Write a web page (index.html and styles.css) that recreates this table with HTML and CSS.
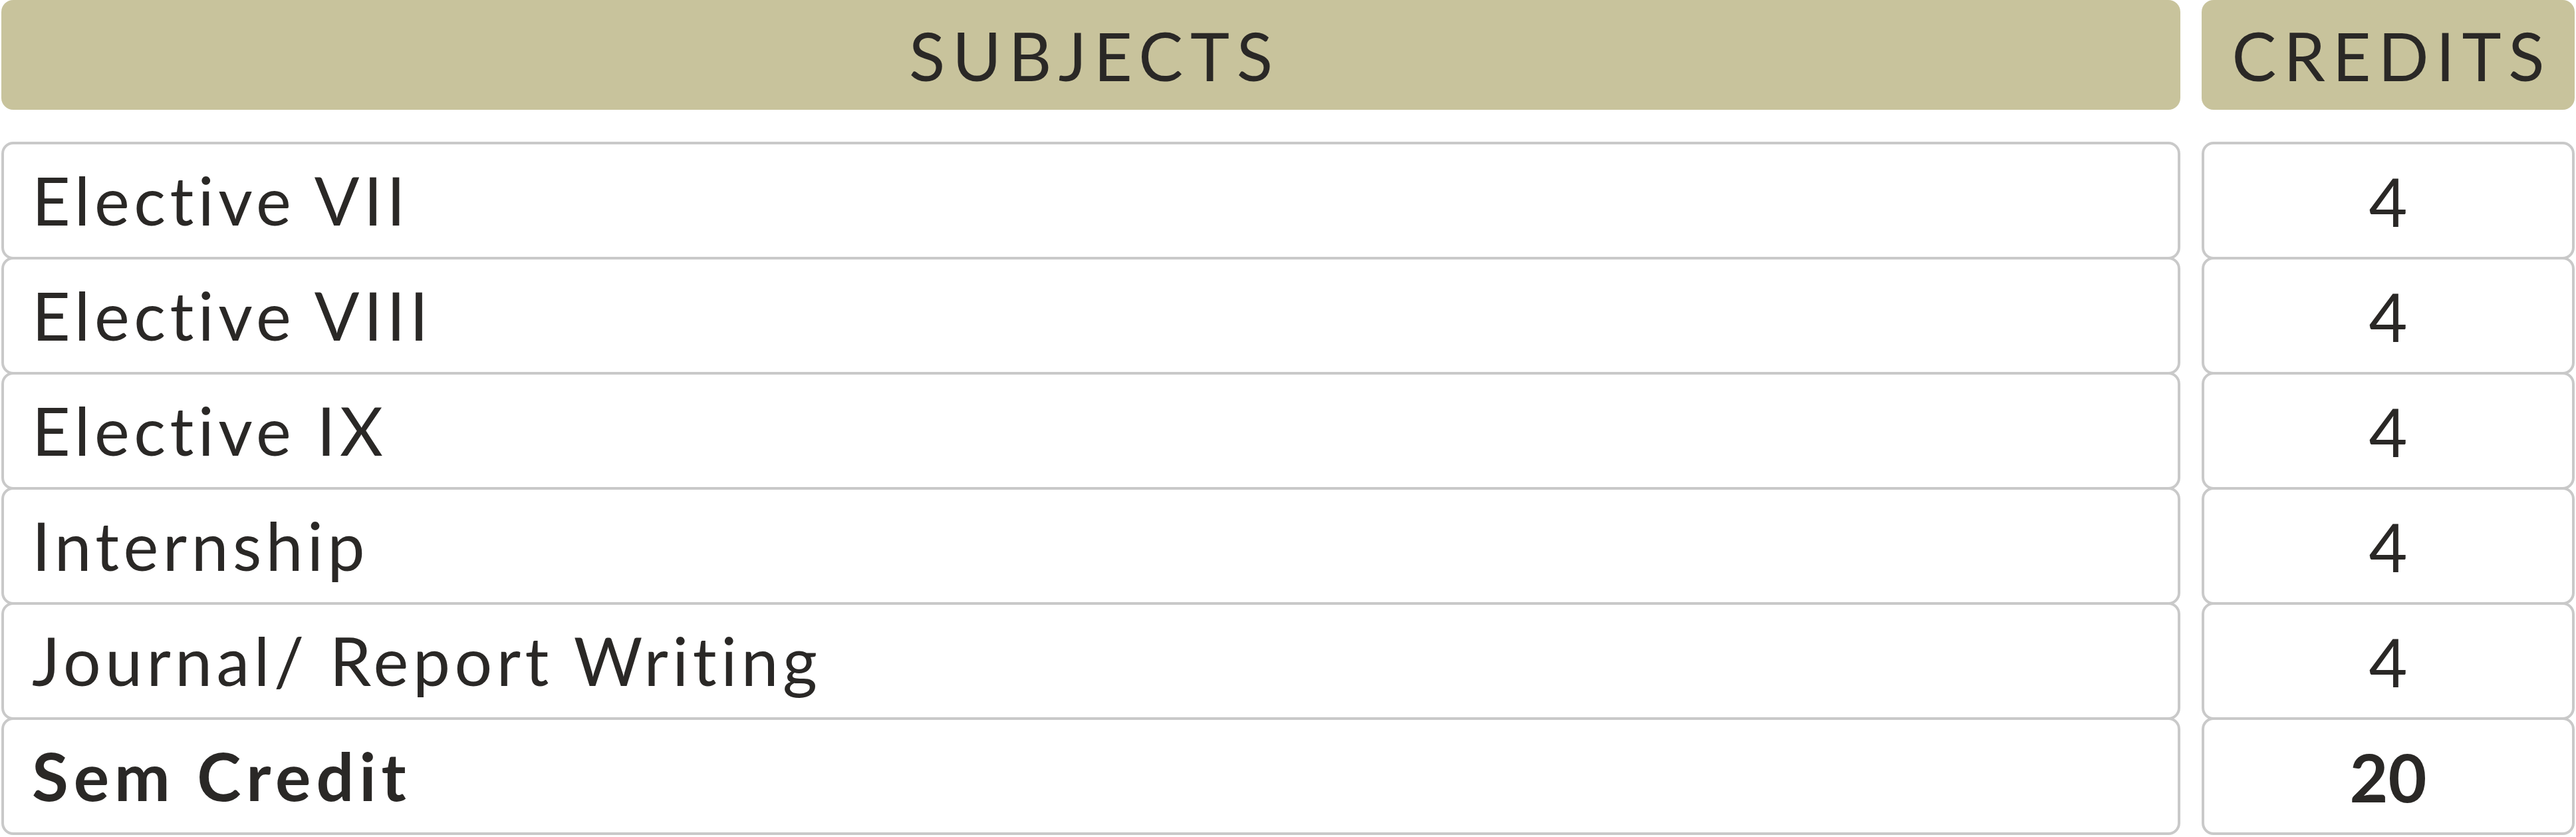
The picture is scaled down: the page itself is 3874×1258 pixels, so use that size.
FILE: index.html
```html
<!DOCTYPE html>
<html lang="en">
<head>
    <meta charset="UTF-8">
    <meta name="viewport" content="width=device-width, initial-scale=1.0">
    <title>Semester Credits</title>
    <link rel="stylesheet" href="styles.css">
</head>
<body>
    <!-- Credits table -->
    <div class="credits-table">
        <!-- Header row -->
        <div class="head-cell">SUBJECTS</div>
        <div class="head-cell">CREDITS</div>

        <!-- Subject rows -->
        <div class="cell subject first">Elective VII</div>
        <div class="cell credit first">4</div>

        <div class="cell subject">Elective VIII</div>
        <div class="cell credit">4</div>

        <div class="cell subject">Elective IX</div>
        <div class="cell credit">4</div>

        <div class="cell subject">Internship</div>
        <div class="cell credit">4</div>

        <div class="cell subject">Journal/ Report Writing</div>
        <div class="cell credit">4</div>

        <!-- Total -->
        <div class="cell subject total">Sem Credit</div>
        <div class="cell credit total">20</div>
    </div>
</body>
</html>
```

FILE: styles.css
```css
/* General body styling */
body {
    margin: 0;
    font-family: 'Lato', 'Liberation Sans', sans-serif;
    background-color: #ffffff;
    color: #2a2826;
}

/* Table grid: wide subject column + narrow credit column */
.credits-table {
    display: grid;
    grid-template-columns: 1fr 561px;
    column-gap: 32px;
    padding: 0 2px 0 2px;
}

/* Tan header pills */
.head-cell {
    background-color: #c8c39c;
    border-radius: 18px;
    height: 165px;
    display: flex;
    align-items: center;
    justify-content: center;
    font-size: 100px;
    letter-spacing: 11px;
    text-indent: 11px; /* balance the trailing letter-spacing */
    margin-bottom: 48px;
}

/* Bordered body cells, stacked so their borders overlap */
.cell {
    box-sizing: border-box;
    height: 177px;
    border: 4px solid #c9c9c9;
    border-radius: 18px;
    display: flex;
    align-items: center;
    font-size: 100px;
    letter-spacing: 6.5px;
    margin-top: -4px;
}

.cell.first {
    margin-top: 0;
}

.subject {
    padding-left: 42px;
    padding-bottom: 4px;
}

.credit {
    justify-content: center;
    letter-spacing: 0;
}

/* Semester total row */
.total {
    font-weight: 700;
}

.subject.total {
    letter-spacing: 8px;
}
```
